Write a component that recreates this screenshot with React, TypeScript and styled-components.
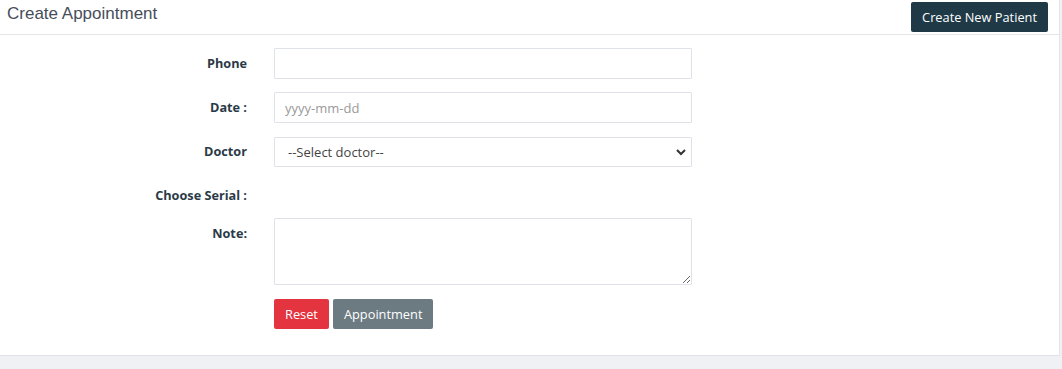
import styled, { createGlobalStyle } from "styled-components";

const GlobalStyle = createGlobalStyle`
    html, body {
        margin: 0;
        padding: 0;
        background-color: #f0f1f5;
        font-family: "Open Sans", "Liberation Sans", sans-serif;
    }
    * {
        box-sizing: border-box;
    }
`;

const Page = styled.div`
    width: 1062px;
    height: 369px;
    background-color: #f0f1f5;
`;
const Card = styled.div`
    width: 1060px;
    height: 356px;
    background-color: white;
    border-right: 1px solid #e3e5ea;
    border-bottom: 1px solid #dfe1e6;
`;
const Header = styled.div`
    display: flex;
    align-items: flex-start;
    justify-content: space-between;
    height: 35px;
    padding: 2px 11px 0 7px;
    border-bottom: 1px solid #e2e4e8;
`;
const Title = styled.h4`
    margin: 0;
    padding-top: 2px;
    font-family: "Liberation Sans", Arial, sans-serif;
    font-size: 17px;
    font-weight: 400;
    color: #464e5b;
`;
const HeaderBtn = styled.button`
    height: 30px;
    padding: 0 11px;
    border: none;
    border-radius: 2px;
    background-color: #1f3a46;
    color: white;
    font-family: "Open Sans", sans-serif;
    font-size: 12.8px;
    cursor: pointer;
`;
const Form = styled.form`
    display: grid;
    grid-template-columns: 247px 418px;
    column-gap: 27px;
    row-gap: 13px;
    padding-top: 13px;
`;
const Label = styled.label<{ $top?: boolean; $short?: boolean }>`
    display: flex;
    align-items: ${(p) => (p.$top ? "flex-start" : "center")};
    justify-content: flex-end;
    padding-top: ${(p) => (p.$top ? "6px" : p.$short ? "4px" : "0")};
    padding-bottom: ${(p) => (p.$top || p.$short ? "0" : "2px")};
    min-height: ${(p) => (p.$short ? "25px" : "31px")};
    font-size: 12.7px;
    font-weight: 700;
    color: #2b3a47;
`;
const Input = styled.input`
    height: 31px;
    width: 100%;
    padding: 0 10px;
    border: 1px solid #dfe2e6;
    border-radius: 1px;
    font-family: "Open Sans", sans-serif;
    font-size: 13px;
    color: #333;
    &::placeholder {
        color: #9a9a9a;
    }
    &:focus {
        outline: none;
    }
`;
const SelectWrap = styled.div`
    position: relative;
    margin-top: 1px;
`;
const Select = styled.select`
    width: 100%;
    height: 30px;
    padding: 0 13px;
    border: 1px solid #dfe2e6;
    border-radius: 1px;
    background: white;
    appearance: none;
    font-family: "Open Sans", sans-serif;
    font-size: 13px;
    color: #444;
`;
const Chevron = styled.svg`
    position: absolute;
    right: 5px;
    top: 11px;
    pointer-events: none;
`;
const Empty = styled.div``;
const TextArea = styled.textarea`
    width: 100%;
    height: 67px;
    border: 1px solid #dfe2e6;
    border-radius: 1px;
    resize: vertical;
    font-family: "Open Sans", sans-serif;
    font-size: 13px;
`;
const Actions = styled.div`
    display: flex;
    gap: 4px;
    margin-top: 1px;
`;
const Btn = styled.button<{ $color: string }>`
    height: 30px;
    padding: 0 11px;
    border: none;
    border-radius: 2px;
    background-color: ${(p) => p.$color};
    color: white;
    font-family: "Open Sans", sans-serif;
    font-size: 12.8px;
    cursor: pointer;
`;

export default function App() {
    return (
        <Page>
            <GlobalStyle />
            <Card>
                <Header>
                    <Title>Create Appointment</Title>
                    <HeaderBtn type="button">Create New Patient</HeaderBtn>
                </Header>
                <Form>
                    <Label htmlFor="phone">Phone</Label>
                    <Input id="phone" type="text" />
                    <Label htmlFor="date">Date :</Label>
                    <Input id="date" type="text" placeholder="yyyy-mm-dd" />
                    <Label htmlFor="doctor">Doctor</Label>
                    <SelectWrap>
                        <Select id="doctor" defaultValue="">
                            <option value="">--Select doctor--</option>
                        </Select>
                        <Chevron width="12" height="8" viewBox="0 0 12 8">
                            <path d="M2 2l4 4 4-4" fill="none" stroke="#333" strokeWidth="2" />
                        </Chevron>
                    </SelectWrap>
                    <Label $short>Choose Serial :</Label>
                    <Empty />
                    <Label htmlFor="note" $top>Note:</Label>
                    <TextArea id="note" />
                    <Empty />
                    <Actions>
                        <Btn type="reset" $color="#e3343f">Reset</Btn>
                        <Btn type="submit" $color="#6c7a82">Appointment</Btn>
                    </Actions>
                </Form>
            </Card>
        </Page>
    );
}
